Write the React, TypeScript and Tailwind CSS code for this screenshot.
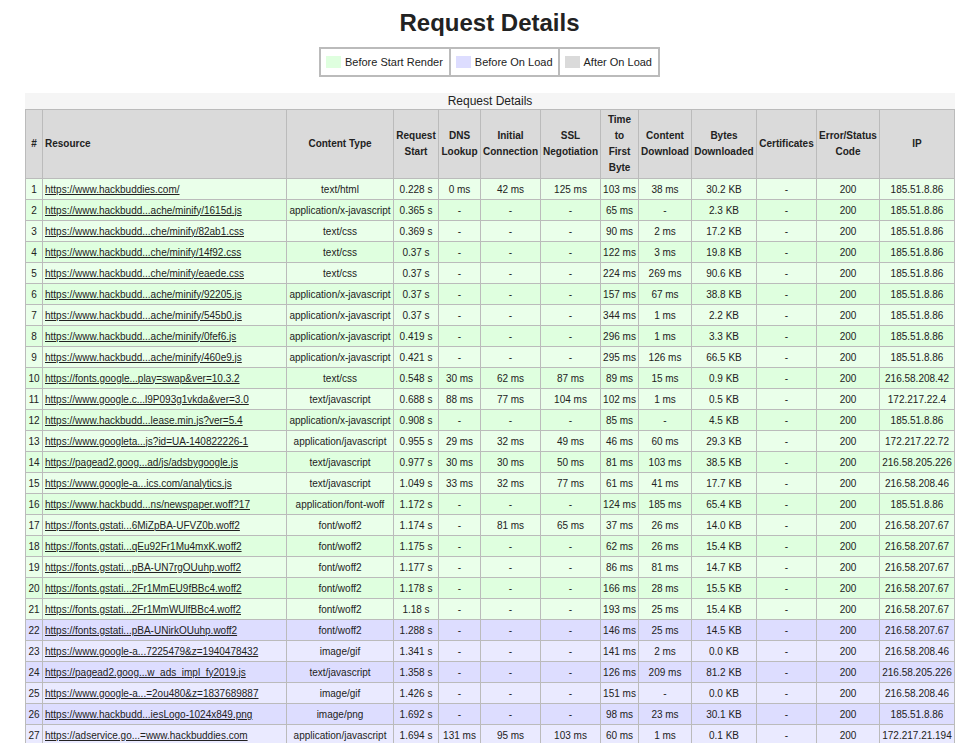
const HEADERS: { lines: string[]; width: number; left?: boolean }[] = [
  { lines: ["#"], width: 17 },
  { lines: ["Resource"], width: 244, left: true },
  { lines: ["Content Type"], width: 107 },
  { lines: ["Request", "Start"], width: 45 },
  { lines: ["DNS", "Lookup"], width: 42 },
  { lines: ["Initial", "Connection"], width: 60 },
  { lines: ["SSL", "Negotiation"], width: 60 },
  { lines: ["Time", "to", "First", "Byte"], width: 38 },
  { lines: ["Content", "Download"], width: 53 },
  { lines: ["Bytes", "Downloaded"], width: 65 },
  { lines: ["Certificates"], width: 60 },
  { lines: ["Error/Status", "Code"], width: 63 },
  { lines: ["IP"], width: 75 },
];

const ROWS: string[][] = [
  ["https://www.hackbuddies.com/", "text/html", "0.228 s", "0 ms", "42 ms", "125 ms", "103 ms", "38 ms", "30.2 KB", "185.51.8.86"],
  ["https://www.hackbudd...ache/minify/1615d.js", "application/x-javascript", "0.365 s", "-", "-", "-", "65 ms", "-", "2.3 KB", "185.51.8.86"],
  ["https://www.hackbudd...che/minify/82ab1.css", "text/css", "0.369 s", "-", "-", "-", "90 ms", "2 ms", "17.2 KB", "185.51.8.86"],
  ["https://www.hackbudd...che/minify/14f92.css", "text/css", "0.37 s", "-", "-", "-", "122 ms", "3 ms", "19.8 KB", "185.51.8.86"],
  ["https://www.hackbudd...che/minify/eaede.css", "text/css", "0.37 s", "-", "-", "-", "224 ms", "269 ms", "90.6 KB", "185.51.8.86"],
  ["https://www.hackbudd...ache/minify/92205.js", "application/x-javascript", "0.37 s", "-", "-", "-", "157 ms", "67 ms", "38.8 KB", "185.51.8.86"],
  ["https://www.hackbudd...ache/minify/545b0.js", "application/x-javascript", "0.37 s", "-", "-", "-", "344 ms", "1 ms", "2.2 KB", "185.51.8.86"],
  ["https://www.hackbudd...ache/minify/0fef6.js", "application/x-javascript", "0.419 s", "-", "-", "-", "296 ms", "1 ms", "3.3 KB", "185.51.8.86"],
  ["https://www.hackbudd...ache/minify/460e9.js", "application/x-javascript", "0.421 s", "-", "-", "-", "295 ms", "126 ms", "66.5 KB", "185.51.8.86"],
  ["https://fonts.google...play=swap&ver=10.3.2", "text/css", "0.548 s", "30 ms", "62 ms", "87 ms", "89 ms", "15 ms", "0.9 KB", "216.58.208.42"],
  ["https://www.google.c...l9P093g1vkda&ver=3.0", "text/javascript", "0.688 s", "88 ms", "77 ms", "104 ms", "102 ms", "1 ms", "0.5 KB", "172.217.22.4"],
  ["https://www.hackbudd...lease.min.js?ver=5.4", "application/x-javascript", "0.908 s", "-", "-", "-", "85 ms", "-", "4.5 KB", "185.51.8.86"],
  ["https://www.googleta...js?id=UA-140822226-1", "application/javascript", "0.955 s", "29 ms", "32 ms", "49 ms", "46 ms", "60 ms", "29.3 KB", "172.217.22.72"],
  ["https://pagead2.goog...ad/js/adsbygoogle.js", "text/javascript", "0.977 s", "30 ms", "30 ms", "50 ms", "81 ms", "103 ms", "38.5 KB", "216.58.205.226"],
  ["https://www.google-a...ics.com/analytics.js", "text/javascript", "1.049 s", "33 ms", "32 ms", "77 ms", "61 ms", "41 ms", "17.7 KB", "216.58.208.46"],
  ["https://www.hackbudd...ns/newspaper.woff?17", "application/font-woff", "1.172 s", "-", "-", "-", "124 ms", "185 ms", "65.4 KB", "185.51.8.86"],
  ["https://fonts.gstati...6MiZpBA-UFVZ0b.woff2", "font/woff2", "1.174 s", "-", "81 ms", "65 ms", "37 ms", "26 ms", "14.0 KB", "216.58.207.67"],
  ["https://fonts.gstati...qEu92Fr1Mu4mxK.woff2", "font/woff2", "1.175 s", "-", "-", "-", "62 ms", "26 ms", "15.4 KB", "216.58.207.67"],
  ["https://fonts.gstati...pBA-UN7rgOUuhp.woff2", "font/woff2", "1.177 s", "-", "-", "-", "86 ms", "81 ms", "14.7 KB", "216.58.207.67"],
  ["https://fonts.gstati...2Fr1MmEU9fBBc4.woff2", "font/woff2", "1.178 s", "-", "-", "-", "166 ms", "28 ms", "15.5 KB", "216.58.207.67"],
  ["https://fonts.gstati...2Fr1MmWUlfBBc4.woff2", "font/woff2", "1.18 s", "-", "-", "-", "193 ms", "25 ms", "15.4 KB", "216.58.207.67"],
  ["https://fonts.gstati...pBA-UNirkOUuhp.woff2", "font/woff2", "1.288 s", "-", "-", "-", "146 ms", "25 ms", "14.5 KB", "216.58.207.67"],
  ["https://www.google-a...7225479&z=1940478432", "image/gif", "1.341 s", "-", "-", "-", "141 ms", "2 ms", "0.0 KB", "216.58.208.46"],
  ["https://pagead2.goog...w_ads_impl_fy2019.js", "text/javascript", "1.358 s", "-", "-", "-", "126 ms", "209 ms", "81.2 KB", "216.58.205.226"],
  ["https://www.google-a...=2ou480&z=1837689887", "image/gif", "1.426 s", "-", "-", "-", "151 ms", "-", "0.0 KB", "216.58.208.46"],
  ["https://www.hackbudd...iesLogo-1024x849.png", "image/png", "1.692 s", "-", "-", "-", "98 ms", "23 ms", "30.1 KB", "185.51.8.86"],
  ["https://adservice.go...=www.hackbuddies.com", "application/javascript", "1.694 s", "131 ms", "95 ms", "103 ms", "60 ms", "1 ms", "0.1 KB", "172.217.21.194"],
];

function Legend({ color, label, wide }: { color: string; label: string; wide?: boolean }) {
  return (
    <td className={`border-2 border-[#bbbbbb] pl-[5px] h-[28px] ${wide ? "pr-[6px]" : "pr-[5px]"}`}>
      <div className="flex items-center gap-[4px]">
        <span className={`w-[15px] h-[12px] ${color}`}></span>
        <span className="text-[11px] text-[#222]">{label}</span>
      </div>
    </td>
  );
}

function rowColor(n: number) {
  if (n <= 21) return n % 2 === 0 ? "bg-[#dfffdf]" : "bg-[#eaffea]";
  return n % 2 === 0 ? "bg-[#ddddff]" : "bg-[#eaeaff]";
}

export default function App() {
  return (
    <div className="font-['Liberation_Sans',Arial,sans-serif] text-[#222] bg-white h-[743px] overflow-hidden">
      <h1 className="text-center text-[24px] font-bold leading-[28px] pt-[9px]">Request Details</h1>
      <div className="flex justify-center mt-[10px]">
        <table className="border-collapse">
          <tbody>
            <tr>
              <Legend color="bg-[#dfffdf]" label="Before Start Render" wide />
              <Legend color="bg-[#ddddff]" label="Before On Load" />
              <Legend color="bg-[#dadada]" label="After On Load" wide />
            </tr>
          </tbody>
        </table>
      </div>

      {/* Request table */}
      <div className="pl-[25px] mt-[16px]">
        <table className="border-collapse table-fixed w-[929px] text-[10px]">
          <caption className="bg-[#f5f5f5] text-[12px] leading-[16px] h-[16px]">Request Details</caption>
          <colgroup>
            {HEADERS.map((h, i) => (
              <col key={i} style={{ width: h.width }} />
            ))}
          </colgroup>
          <thead>
            <tr className="bg-[#dadada]">
              {HEADERS.map((h, i) => (
                <th
                  key={i}
                  className={`border border-[#bbbbbb] h-[69px] p-0 font-bold leading-[16px] whitespace-nowrap ${h.left ? "text-left pl-[2px]" : "text-center"}`}
                >
                  {h.lines.map((line, j) => (
                    <div key={j}>{line}</div>
                  ))}
                </th>
              ))}
            </tr>
          </thead>
          <tbody>
            {ROWS.map((r, i) => {
              const n = i + 1;
              const cells = [...r.slice(1, 9), "-", "200", r[9]];
              return (
                <tr key={n} className={rowColor(n)}>
                  <td className="border border-[#bbbbbb] h-[21px] p-0 text-center">{n}</td>
                  <td className="border border-[#bbbbbb] h-[21px] p-0 pl-[2px] whitespace-nowrap">
                    <a href="#" className="underline">{r[0]}</a>
                  </td>
                  {cells.map((c, j) => (
                    <td key={j} className="border border-[#bbbbbb] h-[21px] p-0 text-center whitespace-nowrap">
                      {c}
                    </td>
                  ))}
                </tr>
              );
            })}
          </tbody>
        </table>
      </div>
    </div>
  );
}
